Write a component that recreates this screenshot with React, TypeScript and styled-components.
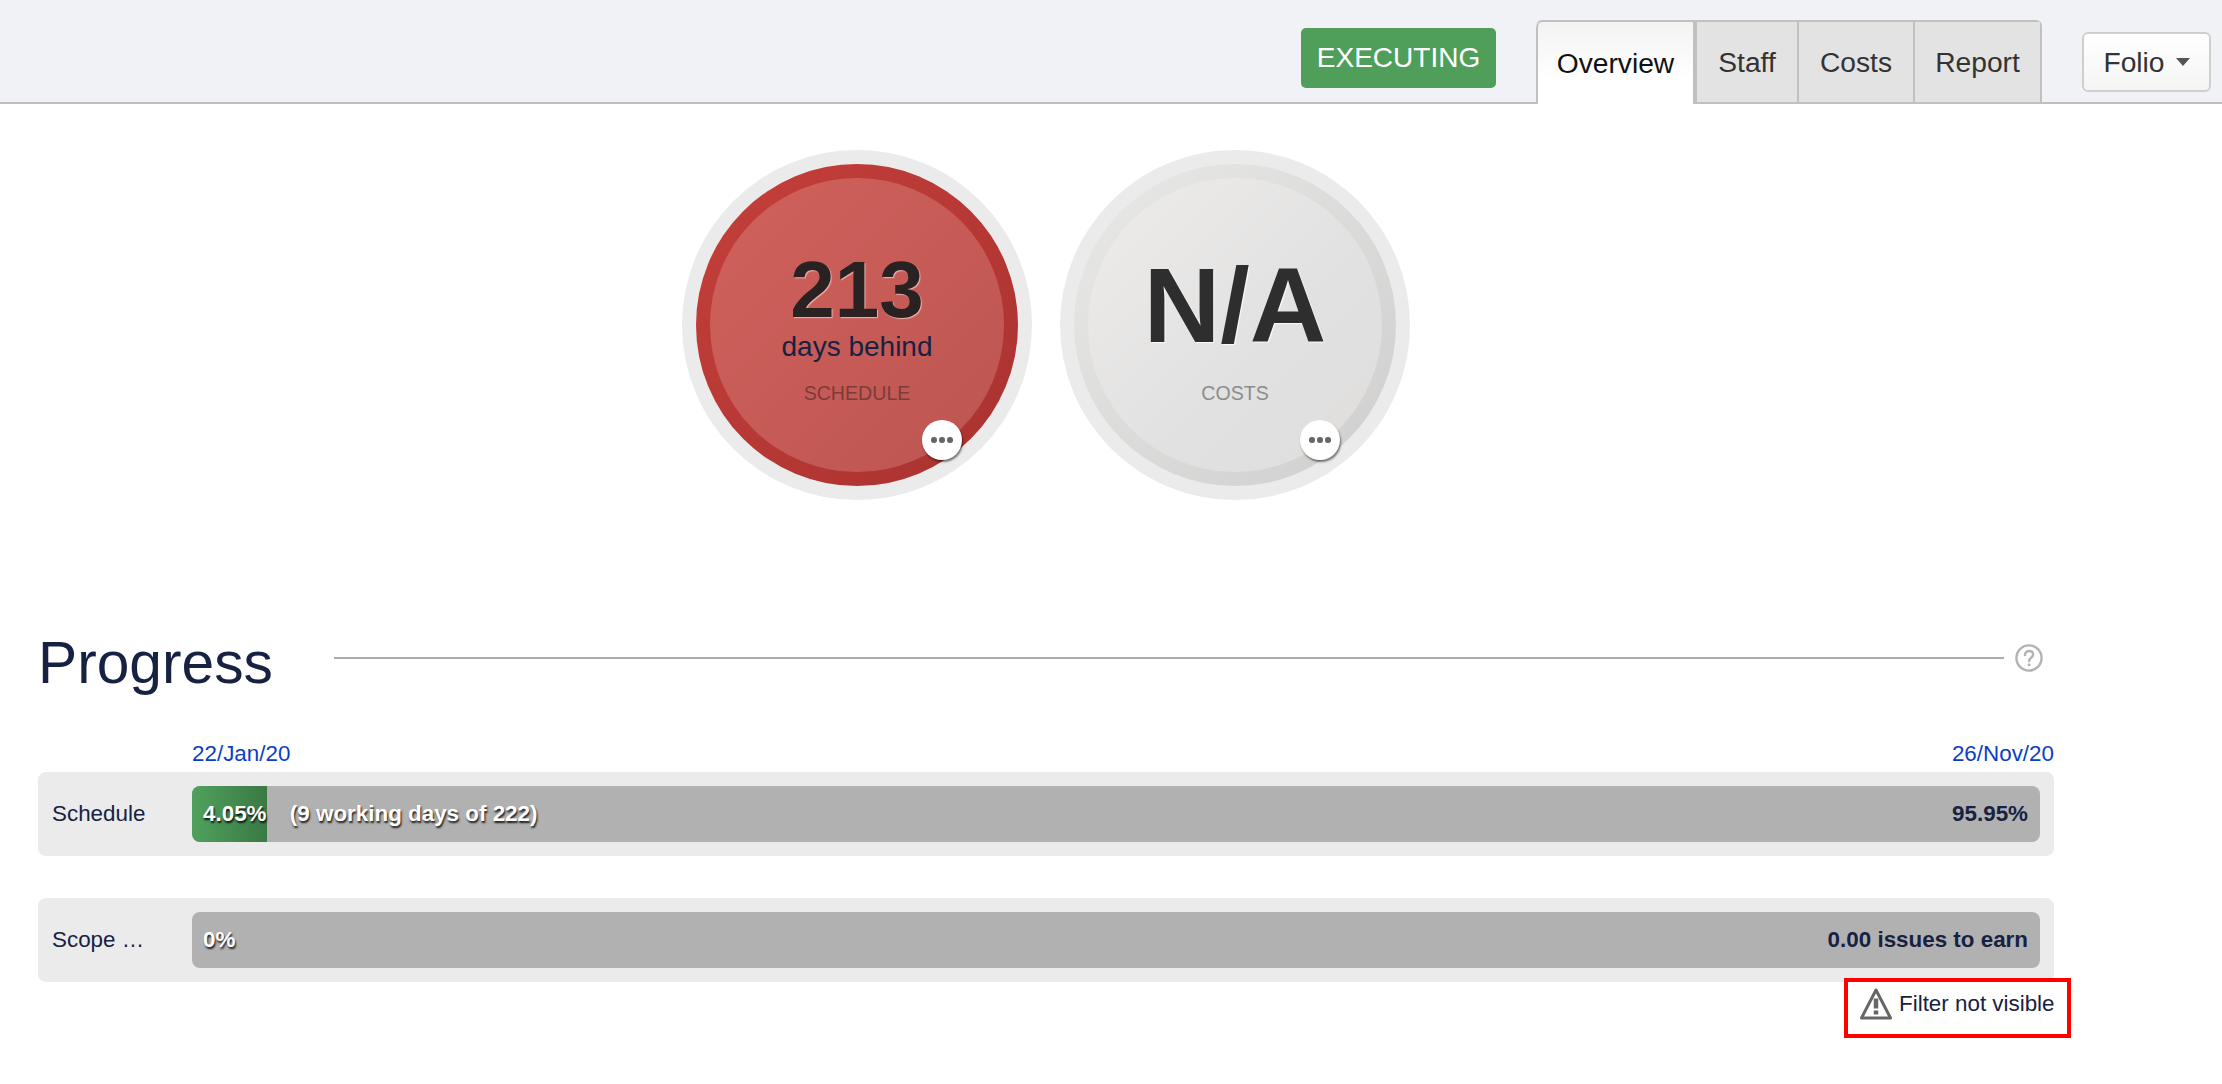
import styled, { createGlobalStyle } from 'styled-components';

const GlobalStyle = createGlobalStyle`
  html, body {
    margin: 0;
    padding: 0;
    background: #fff;
    font-family: "Liberation Sans", Arial, sans-serif;
    color: #172243;
  }
`;

const Header = styled.header`
  height: 102px;
  display: flex;
  justify-content: flex-end;
  align-items: flex-start;
  background: #f0f2f6;
  border-bottom: 2px solid #bfbfbf;
  padding-right: 11px;
`;

const Status = styled.div`
  width: 195px;
  height: 60px;
  margin-top: 28px;
  margin-right: 40px;
  display: flex;
  align-items: center;
  justify-content: center;
  border-radius: 5px;
  background: #4f9f5b;
  color: #fff;
  font-size: 28px;
`;

const Tabs = styled.nav`
  display: flex;
  height: 84px;
  margin-top: 20px;
  margin-right: 40px;
  border-top: 2px solid #c0c0c0;
  border-right: 2px solid #c0c0c0;
  border-radius: 6px 6px 0 0;
  box-sizing: border-box;
`;

const Tab = styled.div<{ $active?: boolean; $width: number }>`
  width: ${({ $width }) => $width}px;
  box-sizing: border-box;
  display: flex;
  align-items: center;
  justify-content: center;
  font-size: 28.2px;
  color: ${({ $active }) => ($active ? '#111' : '#333')};
  background: ${({ $active }) => ($active ? 'linear-gradient(#f3f3f3, #fff 70%)' : '#e3e3e3')};
  border-left: 2px solid #c0c0c0;
  border-bottom: ${({ $active }) => ($active ? '0' : '2px solid #c0c0c0')};
  ${({ $active }) => $active && 'border-right: 2px solid #c0c0c0; border-top-left-radius: 6px;'}
`;

const FolioButton = styled.button`
  width: 129px;
  height: 60px;
  margin-top: 32px;
  box-sizing: border-box;
  display: flex;
  align-items: center;
  justify-content: center;
  gap: 11px;
  padding: 0;
  border: 2px solid #cfcfcf;
  border-radius: 6px;
  background: linear-gradient(#fff, #f5f5f5);
  color: #333;
  font: 28.2px "Liberation Sans", Arial, sans-serif;
`;

const Caret = styled.span`
  width: 0;
  height: 0;
  border-left: 7px solid transparent;
  border-right: 7px solid transparent;
  border-top: 8px solid #555;
`;

const Main = styled.main`
  width: 2092px;
  box-sizing: border-box;
  padding: 0 38px;
`;

const Gauges = styled.section`
  display: flex;
  justify-content: center;
  gap: 28px;
  margin-top: 46px;
`;

const Gauge = styled.div`
  position: relative;
  width: 350px;
  height: 350px;
  box-sizing: border-box;
  padding: 14px;
  border-radius: 50%;
  background: #ebebeb;
`;

const GaugeRing = styled.div<{ $tone: 'red' | 'grey' }>`
  height: 100%;
  box-sizing: border-box;
  padding: 14px;
  border-radius: 50%;
  background: ${({ $tone }) =>
    $tone === 'red'
      ? 'linear-gradient(135deg, #c53f3a, #a93230)'
      : 'linear-gradient(135deg, #e9e9e7, #cfcece)'};
`;

const GaugeFace = styled.div<{ $tone: 'red' | 'grey' }>`
  height: 100%;
  box-sizing: border-box;
  padding-top: 72px;
  border-radius: 50%;
  display: flex;
  flex-direction: column;
  align-items: center;
  background: ${({ $tone }) =>
    $tone === 'red'
      ? 'linear-gradient(135deg, #d1615c, #bc5551)'
      : 'linear-gradient(135deg, #edece9, #e2e1e2 60%, #dfdedc)'};
`;

const GaugeMain = styled.div`
  height: 112px;
  display: flex;
  flex-direction: column;
  align-items: center;
`;

const Value = styled.div<{ $tone: 'red' | 'grey' }>`
  font-weight: 700;
  font-size: ${({ $tone }) => ($tone === 'red' ? 80 : 106)}px;
  line-height: ${({ $tone }) => ($tone === 'red' ? 80 : 110)}px;
  color: ${({ $tone }) => ($tone === 'red' ? '#2a2222' : '#2e2e2e')};
  text-shadow: 1px 1px 1px ${({ $tone }) => ($tone === 'red' ? 'rgba(255, 220, 215, 0.7)' : 'rgba(255, 255, 255, 0.9)')};
`;

const Unit = styled.div`
  font-size: 28px;
  line-height: 32px;
  margin-top: 1px;
  color: #172243;
`;

const Caption = styled.div<{ $tone: 'red' | 'grey' }>`
  margin-top: 19px;
  font-size: 19.6px;
  line-height: 24px;
  color: ${({ $tone }) => ($tone === 'red' ? '#7d3b39' : '#8c8c8c')};
`;

const MoreButton = styled.div`
  position: absolute;
  left: 240px;
  top: 270px;
  width: 40px;
  height: 40px;
  display: flex;
  align-items: center;
  justify-content: center;
  gap: 2.5px;
  border-radius: 50%;
  background: #fff;
  box-shadow: 1px 2px 2px rgba(0, 0, 0, 0.5);
`;

const Dot = styled.span`
  width: 5.5px;
  height: 5.5px;
  border-radius: 50%;
  background: #666;
`;

const TitleRow = styled.div`
  display: flex;
  align-items: center;
  margin-top: 120px;
  padding-right: 11px;
`;

const Title = styled.h2`
  margin: 0;
  padding-top: 10px;
  font-size: 58.7px;
  line-height: 66px;
  font-weight: 400;
  color: #172243;
`;

const TitleLine = styled.div`
  flex: 1;
  height: 2px;
  margin: 0 11px 0 61px;
  background: #ababab;
`;

const Dates = styled.div`
  display: flex;
  justify-content: space-between;
  margin: 46px 0 6px;
  padding-left: 154px;
  font-size: 22.4px;
  line-height: 24px;
  color: #0a3fc4;
`;

const Rows = styled.div`
  display: flex;
  flex-direction: column;
  gap: 42px;
`;

const Row = styled.div`
  display: flex;
  align-items: center;
  height: 84px;
  box-sizing: border-box;
  padding: 0 14px;
  border-radius: 8px;
  background: #ebebeb;
`;

const RowLabel = styled.div`
  width: 140px;
  flex: none;
  font-size: 22.4px;
  color: #172243;
`;

const Bar = styled.div`
  flex: 1;
  height: 56px;
  display: flex;
  align-items: center;
  border-radius: 8px;
  overflow: hidden;
  background: #b1b1b1;
  font-size: 22.4px;
  font-weight: 700;
  white-space: nowrap;
`;

const BarFill = styled.div`
  align-self: stretch;
  display: flex;
  align-items: center;
  flex: none;
  box-sizing: border-box;
  background: linear-gradient(90deg, #50a15c, #3a7944);
`;

const OnBar = styled.span<{ $gap?: number }>`
  margin-left: ${({ $gap = 11 }) => $gap}px;
  color: #fff;
  text-shadow: 1px 2px 2px rgba(0, 0, 0, 0.85);
`;

const BarRest = styled.span`
  margin-left: auto;
  padding-right: 12px;
  color: #172243;
`;

const FilterRow = styled.div`
  display: flex;
  justify-content: flex-end;
  margin: -4px -17px 0 0;
`;

const FilterWarning = styled.div`
  width: 227px;
  height: 60px;
  box-sizing: border-box;
  display: flex;
  align-items: flex-start;
  gap: 7px;
  padding: 6px 0 0 12px;
  border: 4px solid #f00;
  font-size: 22.4px;
  line-height: 32px;
  color: #172243;
  white-space: nowrap;
`;

const App = () => {
  return (
    <>
      <GlobalStyle />
      <Header>
        <Status>EXECUTING</Status>
        <Tabs>
          <Tab $active $width={159}>Overview</Tab>
          <Tab $width={102}>Staff</Tab>
          <Tab $width={116}>Costs</Tab>
          <Tab $width={127}>Report</Tab>
        </Tabs>
        <FolioButton>
          Folio
          <Caret />
        </FolioButton>
      </Header>
      <Main>
        <Gauges>
          <Gauge>
            <GaugeRing $tone="red">
              <GaugeFace $tone="red">
                <GaugeMain>
                  <Value $tone="red">213</Value>
                  <Unit>days behind</Unit>
                </GaugeMain>
                <Caption $tone="red">SCHEDULE</Caption>
              </GaugeFace>
            </GaugeRing>
            <MoreButton><Dot /><Dot /><Dot /></MoreButton>
          </Gauge>
          <Gauge>
            <GaugeRing $tone="grey">
              <GaugeFace $tone="grey">
                <GaugeMain>
                  <Value $tone="grey">N/A</Value>
                </GaugeMain>
                <Caption $tone="grey">COSTS</Caption>
              </GaugeFace>
            </GaugeRing>
            <MoreButton><Dot /><Dot /><Dot /></MoreButton>
          </Gauge>
        </Gauges>

        <TitleRow>
          <Title>Progress</Title>
          <TitleLine />
          <svg width="28" height="28" viewBox="0 0 28 28" fill="none" stroke="#b3b3b3" strokeWidth="2.4">
            <circle cx="14" cy="14" r="12.6" />
            <path d="M10 11c0-2.6 1.8-4 4.1-4 2.3 0 4 1.4 4 3.5 0 3.2-4 3.3-4 6.5" strokeLinecap="round" />
            <circle cx="14.1" cy="20.8" r="1.5" fill="#b3b3b3" stroke="none" />
          </svg>
        </TitleRow>

        <Dates>
          <span>22/Jan/20</span>
          <span>26/Nov/20</span>
        </Dates>
        <Rows>
          <Row>
            <RowLabel>Schedule</RowLabel>
            <Bar>
              <BarFill style={{ width: '4.05%' }}>
                <OnBar>4.05%</OnBar>
              </BarFill>
              <OnBar $gap={23}>(9 working days of 222)</OnBar>
              <BarRest>95.95%</BarRest>
            </Bar>
          </Row>
          <Row>
            <RowLabel>Scope …</RowLabel>
            <Bar>
              <OnBar>0%</OnBar>
              <BarRest>0.00 issues to earn</BarRest>
            </Bar>
          </Row>
        </Rows>
        <FilterRow>
          <FilterWarning>
            <svg width="32" height="32" viewBox="0 0 32 32" fill="none" stroke="#666" strokeWidth="3" strokeLinejoin="round">
              <path d="M16 2 30.500 30H1.500Z" />
              <path d="M16 10.500v10" strokeWidth="4.500" />
              <path d="M16 22.500v4" strokeWidth="4.500" />
            </svg>
            Filter not visible
          </FilterWarning>
        </FilterRow>
      </Main>
    </>
  );
};

export default App;
